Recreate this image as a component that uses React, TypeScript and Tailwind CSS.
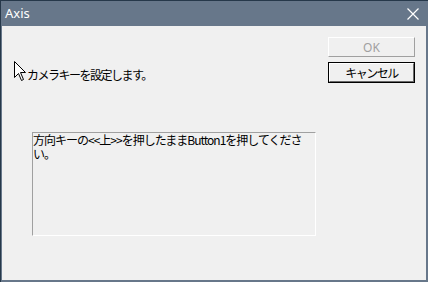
const jp = { fontFamily: '"Noto Sans CJK JP", "Noto Sans", sans-serif' };

function Cursor() {
  return (
    <svg className="absolute left-[12px] top-[35px]" width="13" height="21" viewBox="0 0 13 21">
      <path
        d="M0.5 0.5 L0.5 16.5 L4.5 12.5 L7.5 19.5 L9.5 18.5 L6.5 11.5 L11.5 11.5 Z"
        fill="#fff"
        stroke="#000"
        strokeWidth="1"
      />
    </svg>
  );
}

function CloseIcon() {
  return (
    <svg width="12" height="12" viewBox="0 0 12 12">
      <path d="M0.5 0.5 L11.5 11.5 M11.5 0.5 L0.5 11.5" stroke="#fff" strokeWidth="1.2" />
    </svg>
  );
}

export default function App() {
  return (
    <div className="w-[428px] h-[282px] flex flex-col bg-[#67778a] border-l border-t border-[#26384a] pr-[2px] pb-[2px] pl-[1px]">
      {/* title bar */}
      <div className="h-[25px] flex items-center justify-between pl-[3px] pr-[7px] text-white">
        <span className="text-[13px] leading-none" style={{ fontFamily: '"Noto Sans", sans-serif' }}>
          Axis
        </span>
        <CloseIcon />
      </div>

      {/* client area */}
      <div className="relative flex-1 bg-[#f0f0f0] flex text-[12px] leading-[13px] text-black" style={jp}>
        <Cursor />
        <div className="flex-1 flex flex-col">
          <div className="ml-[25px] mt-[42px] tracking-[-1.5px]">カメラキーを設定します。</div>
          <div className="ml-[30px] mt-[51px] w-[284px] h-[104px] border-t border-l border-[#a0a0a0] border-b border-r border-b-white border-r-white tracking-[-1px] leading-[14px]">
            <div className="whitespace-nowrap">方向キーの&lt;&lt;上&gt;&gt;を押したままButton1を押してくださ</div>
            <div>い。</div>
          </div>
        </div>
        <div className="w-[87px] mr-[11px] pt-[11px] flex flex-col gap-[5px]">
          <div
            className="h-[20px] flex items-center justify-center border border-t-white border-l-white border-b-[#a0a0a0] border-r-[#a0a0a0] bg-[#f0f0f0] text-[#a0a0a0]"
            style={{ fontFamily: '"Noto Sans", sans-serif' }}
          >
            OK
          </div>
          <div className="h-[21px] border border-black">
            <div className="h-full flex items-center justify-center border border-t-white border-l-white border-b-[#696969] border-r-[#696969] tracking-[-1.5px]">
              キャンセル
            </div>
          </div>
        </div>
      </div>
    </div>
  );
}
